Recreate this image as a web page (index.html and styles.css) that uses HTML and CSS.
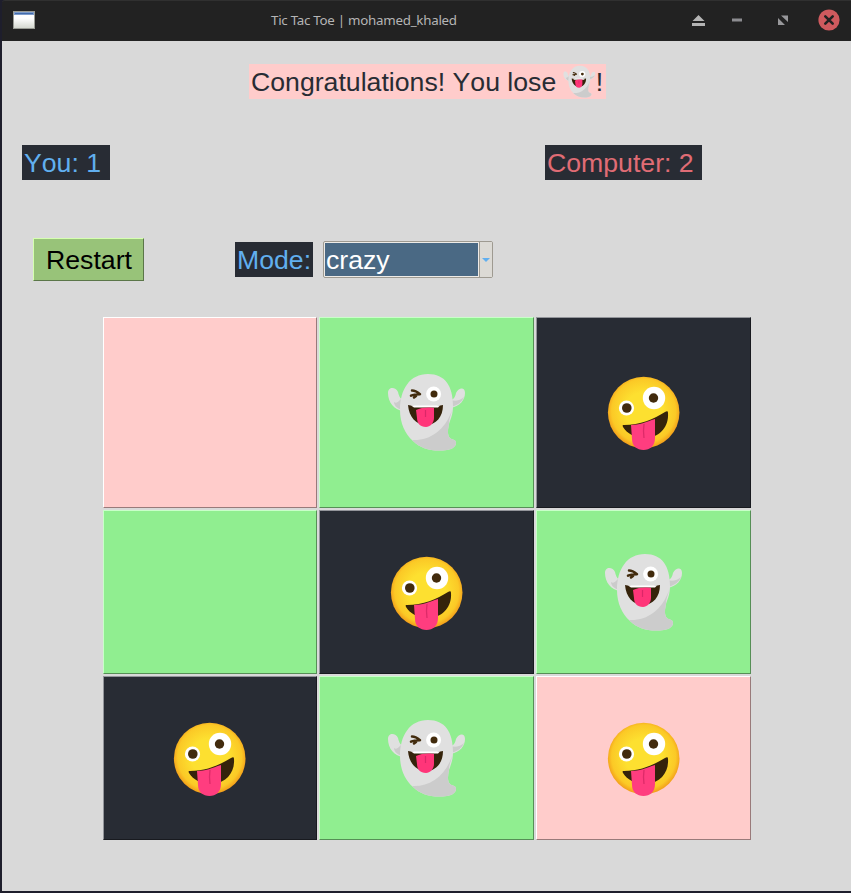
FILE: index.html
```html
<!DOCTYPE html>
<html lang="en">
<head>
<meta charset="utf-8">
<title>Tic Tac Toe | mohamed_khaled</title>
<link rel="stylesheet" href="styles.css">
</head>
<body>
<svg class="defs" aria-hidden="true">
  <defs>
    <radialGradient id="skin" cx=".5" cy=".48" r=".52">
      <stop offset=".5" stop-color="#fde030"/><stop offset=".86" stop-color="#fbc926"/><stop offset="1" stop-color="#f29b1a"/>
    </radialGradient>
    <linearGradient id="page" x1="0" y1="0" x2="0" y2="1"><stop stop-color="#fff"/><stop offset=".3" stop-color="#fff"/><stop offset="1" stop-color="#d5d8d0"/></linearGradient>
    <symbol id="ghost" viewBox="12 7 80 80">
      <path fill="#e0e0e0" d="M28 46C19 45 13 37 13 28c0-7 8-6 10-1 1 5 3 8 7 8zM76 43c9-2 14-8 14-15 0-7-7-5-9 0-1 5-3 7-7 8z"/>
      <path fill="#bdbdbd" opacity=".6" d="M28 45C21 44 19 39 19 37c2 2 4 0 7-3zM76 42c7-2 11-5 13-10-3 3-9 5-13 3z"/>
      <path fill="#e0e0e0" d="M53 9C35 9 25 24 25 45c0 13 5 24 13 31 8 8 20 11 34 9 6-1 9-4 9-7 0-4-4-3-6-5-3-3-2-9-1-14 2-6 4-10 4-18C78 21 70 9 53 9z"/>
      <path fill="#ccc" d="M77 45c-1 6-3 8-3 14-1 5-2 11 1 14 2 2 6 1 6 5 0 3-3 6-9 7-14 2-26-1-34-9l-1-1C54 76 70 66 77 45z"/>
      <circle cx="58.600" cy="29" r="7.500" fill="#fff"/><circle cx="59" cy="29" r="3.500" fill="#422b0d"/>
      <path fill="none" stroke="#422b0d" stroke-width="2.500" stroke-linecap="round" stroke-linejoin="round" d="M37 25.500c2 0 6 2 8 3.700-3 0-6 0-9 1.500M41 31l-2 1.500"/>
      <path fill="#35230b" d="M33 40c10 2 25 2 35 0 0 12-7 20-17 20S34 52 33 40z"/>
      <path fill="#fff" d="M36 40.600h29l-2 2H39z"/>
      <path fill="#ff3579" d="M41 45c5-3 15-3 18-2v10c0 5-4 9-8 9-6 0-9-4-9-9z"/>
      <path fill="none" stroke="#db2768" stroke-width="1.200" d="M50.500 45v7"/>
    </symbol>
    <symbol id="zany" viewBox="9 7 80 80">
      <circle cx="48.700" cy="47.500" r="35.800" fill="url(#skin)"/>
      <circle cx="31.500" cy="43" r="7.600" fill="#fff"/><circle cx="31.800" cy="43" r="4.800" fill="#422b0d"/>
      <circle cx="59" cy="33" r="11.200" fill="#fff"/><circle cx="58.500" cy="33" r="4.700" fill="#422b0d"/>
      <path fill="#35230b" d="M29 60c16 0 30-6 41-13 2-1 3-1 3 1 1 14-8 23-20 25-11 1-21-4-25-11-1-2 0-2 1-2z"/>
      <path fill="#ff3d7f" d="M36 60c8 0 15-3 24-6v19c0 8-5 12-11.500 12S37 81 37 74z"/>
      <path fill="none" stroke="#dd2a69" stroke-width="1.300" d="M49 59q-1 7 0 14"/>
    </symbol>
  </defs>
</svg>
<div class="window">
  <header class="titlebar">
    <svg class="app-icon" viewBox="0 0 22 18"><path fill="#999b94" d="M0 0h22v18H0z"/><path fill="url(#page)" d="M1 3h20v14H1z"/><path fill="#7e9ccc" d="M1 1h20v3H1z"/><path fill="#416bab" d="M2 2h18v1H2z"/></svg>
    <span class="title">Tic Tac Toe | mohamed_khaled</span>
    <svg class="controls" viewBox="0 0 154 24">
      <path fill="#b4b4b4" d="M6.500 13l6-6 6 6zM6 15h13v3H6z"/>
      <path fill="#8c8c90" d="M46 10.500h10v3H46z"/>
      <path fill="#98989b" d="M95 7.500h7v6.500zM92 10v7h7z"/>
      <circle cx="143" cy="12" r="10.600" fill="#cf5a5e"/><path fill="none" stroke="#222" stroke-width="2.600" stroke-linecap="round" d="M139.300 8.300l7.400 7.400m0-7.400l-7.400 7.400"/>
    </svg>
  </header>
  <main class="content">
    <div class="status"><span>Congratulations! You lose </span><svg class="status-icon"><use href="#ghost"/></svg><span>!</span></div>
    <div class="scores"><span class="label you">You: 1</span><span class="label computer">Computer: 2</span></div>
    <div class="toolbar">
      <button class="restart">Restart</button>
      <span class="label mode">Mode:</span>
      <div class="combo"><span class="value">crazy</span><span class="arrow"><svg viewBox="0 0 8 4"><path fill="#61afef" d="M0 0h8L4 4z"/></svg></span></div>
    </div>
    <div class="board">
      <div class="cell pink"></div>
      <div class="cell green"><svg><use href="#ghost"/></svg></div>
      <div class="cell dark"><svg><use href="#zany"/></svg></div>
      <div class="cell green"></div>
      <div class="cell dark"><svg><use href="#zany"/></svg></div>
      <div class="cell green"><svg><use href="#ghost"/></svg></div>
      <div class="cell dark"><svg><use href="#zany"/></svg></div>
      <div class="cell green"><svg><use href="#ghost"/></svg></div>
      <div class="cell pink"><svg><use href="#zany"/></svg></div>
    </div>
  </main>
</div>
</body>
</html>
```
FILE: styles.css
```css
* { box-sizing: border-box; }
body { margin: 0; background: #1e1e2c; font: 26.67px/31px "Liberation Sans", Arial, sans-serif; font-kerning: none; }
svg { display: block; flex: none; }
.defs { position: absolute; width: 0; height: 0; }
.window { height: 893px; padding-left: 2px; overflow: hidden; }
.titlebar { display: flex; align-items: center; height: 41px; padding: 0 11px 3px 11px; background: #222; border-top: 1px solid #303030; border-radius: 3px 0 0; }
.app-icon { width: 22px; height: 18px; }
.title { flex: 1; padding-left: 236px; color: #b5b5b5; font: 13.33px/20px "Noto Sans", sans-serif; letter-spacing: -.26px; white-space: nowrap; }
.controls { width: 154px; height: 24px; }
.content { height: 850px; padding-top: 23px; background: #d9d9d9; }
.status { display: flex; align-items: center; width: 357px; height: 35px; margin-left: 247px; padding: 2px 2px 0; background: #ffcccb; color: #282c34; white-space: pre; }
.status-icon { width: 33px; height: 33px; margin: 0 0 2px -1px; }
.scores { display: flex; gap: 435px; margin: 46px 0 0 20px; }
.label { height: 35px; padding: 3px 2px 1px; background: #282c34; color: #61afef; white-space: nowrap; }
.you { width: 88px; }
.computer { width: 157px; color: #e06c75; }
.toolbar { display: flex; align-items: center; height: 43px; margin: 58px 0 0 31px; }
.restart { width: 111px; height: 43px; padding: 2px 0 0 1px; border: 1px solid; border-color: #d5ffb0 #5b7649 #5b7649 #d5ffb0; background: #98c379; color: #000; font: inherit; }
.mode { width: 78px; margin: 0 10px 0 91px; }
.combo { display: flex; width: 170px; height: 37px; border: 1px solid #9e9a91; border-radius: 2px; background: #eeebe7; }
.value { flex: 1; margin: 1px; padding: 2px 1px 0; background: #4a6984; color: #fff; }
.arrow { display: flex; align-items: center; justify-content: center; width: 13px; border-left: 1px solid #9e9a91; background: #dcdad5; }
.arrow svg { width: 8px; height: 4px; }
.board { display: grid; grid-template: 191px 164px 164px / 214px 215px 215px; gap: 2px; margin: 36px 0 0 101px; }
.cell { display: flex; align-items: center; justify-content: center; padding-bottom: 1px; border: 1px solid; }
.cell svg { width: 80px; height: 80px; }
.pink { background: #ffcccb; border-color: #fff #997a7a #997a7a #fff; }
.green { background: #90ee90; border-color: #c9ffc9 #568f56 #568f56 #c9ffc9; }
.dark { background: #282c34; border-color: #93959a #181a1f #181a1f #93959a; }
```
